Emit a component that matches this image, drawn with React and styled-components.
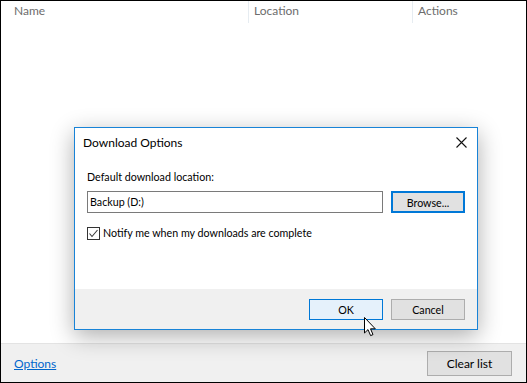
import React from "react";
import styled, { createGlobalStyle } from "styled-components";

const GlobalStyle = createGlobalStyle`
	html, body {
		margin: 0;
		padding: 0;
		background: #ffffff;
	}
	* {
		box-sizing: border-box;
	}
`;

const columns = [
	{ label: "Name", width: 248, pad: 13 },
	{ label: "Location", width: 164, pad: 5 },
	{ label: "Actions", width: null, pad: 5 },
];

const CheckIcon = () => (
	<svg width="11" height="11" viewBox="0 0 11 11">
		<polyline points="1.5,5.5 4,8.5 9.5,2" fill="none" stroke="#3a3a3a" strokeWidth="1.1" />
	</svg>
);

const CloseIcon = () => (
	<svg width="11" height="11" viewBox="0 0 11 11">
		<path d="M0.5 0.5 L10.5 10.5 M10.5 0.5 L0.5 10.5" stroke="#111" strokeWidth="1.1" />
	</svg>
);

const ArrowCursor = () => (
	<svg width="13" height="20" viewBox="0 0 13 20">
		<path
			d="M0.5 0.5 L0.5 16 L4 12.6 L6.6 18.6 L9 17.6 L6.5 11.8 L11.3 11.8 Z"
			fill="#ffffff"
			stroke="#000000"
			strokeWidth="1"
			strokeLinejoin="miter"
		/>
	</svg>
);

const App = () => {
	return (
		<>
			<GlobalStyle />
			<Frame>
				<Header>
					{columns.map((c) => (
						<HeaderCell key={c.label} $width={c.width} $pad={c.pad}>
							{c.label}
						</HeaderCell>
					))}
				</Header>
				<ListArea>
					<Dialog>
						<TitleBar>
							<Title>Download Options</Title>
							<CloseButton>
								<CloseIcon />
							</CloseButton>
						</TitleBar>
						<Body>
							<FieldLabel>Default download location:</FieldLabel>
							<FieldRow>
								<TextInput>Backup (D:)</TextInput>
								<Button $focused>Browse...</Button>
							</FieldRow>
							<CheckRow>
								<CheckBox>
									<CheckIcon />
								</CheckBox>
								<CheckLabel>Notify me when my downloads are complete</CheckLabel>
							</CheckRow>
						</Body>
						<Footer>
							<Button $hover>OK</Button>
							<Button>Cancel</Button>
						</Footer>
						<Cursor>
							<ArrowCursor />
						</Cursor>
					</Dialog>
				</ListArea>
				<BottomBar>
					<OptionsLink>Options</OptionsLink>
					<ClearButton>Clear list</ClearButton>
				</BottomBar>
			</Frame>
		</>
	);
};

export default App;

const Frame = styled.div`
	width: 527px;
	height: 383px;
	border: 1px solid #000000;
	display: flex;
	flex-direction: column;
	font-family: Lato, "Noto Sans", sans-serif;
	font-size: 12px;
	color: #000000;
	background: #ffffff;
	overflow: hidden;
`;
const Header = styled.div`
	display: flex;
	height: 22px;
	flex-shrink: 0;
`;
const HeaderCell = styled.div`
	width: ${(p) => (p.$width ? `${p.$width}px` : "auto")};
	flex: ${(p) => (p.$width ? "none" : "1")};
	padding-left: ${(p) => p.$pad}px;
	color: #6d6d6d;
	line-height: 19px;
	border-right: ${(p) => (p.$width ? "1px solid #e6ecf1" : "none")};
`;
const ListArea = styled.div`
	flex: 1;
	position: relative;
`;
const Dialog = styled.div`
	position: absolute;
	left: 73px;
	top: 104px;
	width: 404px;
	height: 203px;
	border: 1px solid #1883d7;
	background: #ffffff;
	display: flex;
	flex-direction: column;
	font-size: 10.7px;
	box-shadow: 0 6px 22px rgba(0, 0, 0, 0.32);
`;
const TitleBar = styled.div`
	height: 31px;
	display: flex;
	align-items: center;
	justify-content: space-between;
	padding: 0 9px 2px 8px;
`;
const Title = styled.div`
	font-size: 12px;
	color: #000000;
`;
const CloseButton = styled.div`
	display: flex;
	align-items: center;
	padding-right: 1px;
`;
const Body = styled.div`
	flex: 1;
	padding: 10px 12px 0 12px;
`;
const FieldLabel = styled.div`
	line-height: 16px;
`;
const FieldRow = styled.div`
	display: flex;
	gap: 8px;
	margin-top: 6px;
`;
const TextInput = styled.div`
	flex: 1;
	height: 22px;
	border: 1px solid #7a7a7a;
	padding-left: 2px;
	line-height: 19px;
`;
const Button = styled.div`
	width: 74px;
	height: ${(p) => (p.$focused ? "22px" : "21px")};
	display: flex;
	align-items: center;
	justify-content: center;
	background: ${(p) => (p.$hover ? "#e5f1fb" : "#e1e1e1")};
	border: ${(p) => (p.$focused ? "2px solid #0078d7" : p.$hover ? "1px solid #0078d7" : "1px solid #adadad")};
	color: #000000;
`;
const CheckRow = styled.div`
	display: flex;
	align-items: center;
	margin-top: 13px;
	gap: 3px;
`;
const CheckBox = styled.div`
	width: 13px;
	height: 13px;
	border: 1px solid #333333;
	display: flex;
	align-items: center;
	justify-content: center;
`;
const CheckLabel = styled.div`
	line-height: 14px;
`;
const Footer = styled.div`
	height: 40px;
	background: #f0f0f0;
	display: flex;
	justify-content: flex-end;
	gap: 8px;
	padding: 10px 12px 0 0;
`;
const Cursor = styled.div`
	position: absolute;
	left: 289px;
	top: 189px;
	line-height: 0;
`;
const BottomBar = styled.div`
	height: 39px;
	flex-shrink: 0;
	border-top: 1px solid #e3e3e3;
	background: #f0f0f0;
	display: flex;
	align-items: center;
	justify-content: space-between;
	padding: 0 14px 0 13px;
`;
const OptionsLink = styled.a`
	color: #0066cc;
	text-decoration: underline;
	cursor: pointer;
`;
const ClearButton = styled.div`
	width: 85px;
	height: 25px;
	border: 1px solid #adadad;
	background: #e1e1e1;
	display: flex;
	align-items: center;
	justify-content: center;
`;
